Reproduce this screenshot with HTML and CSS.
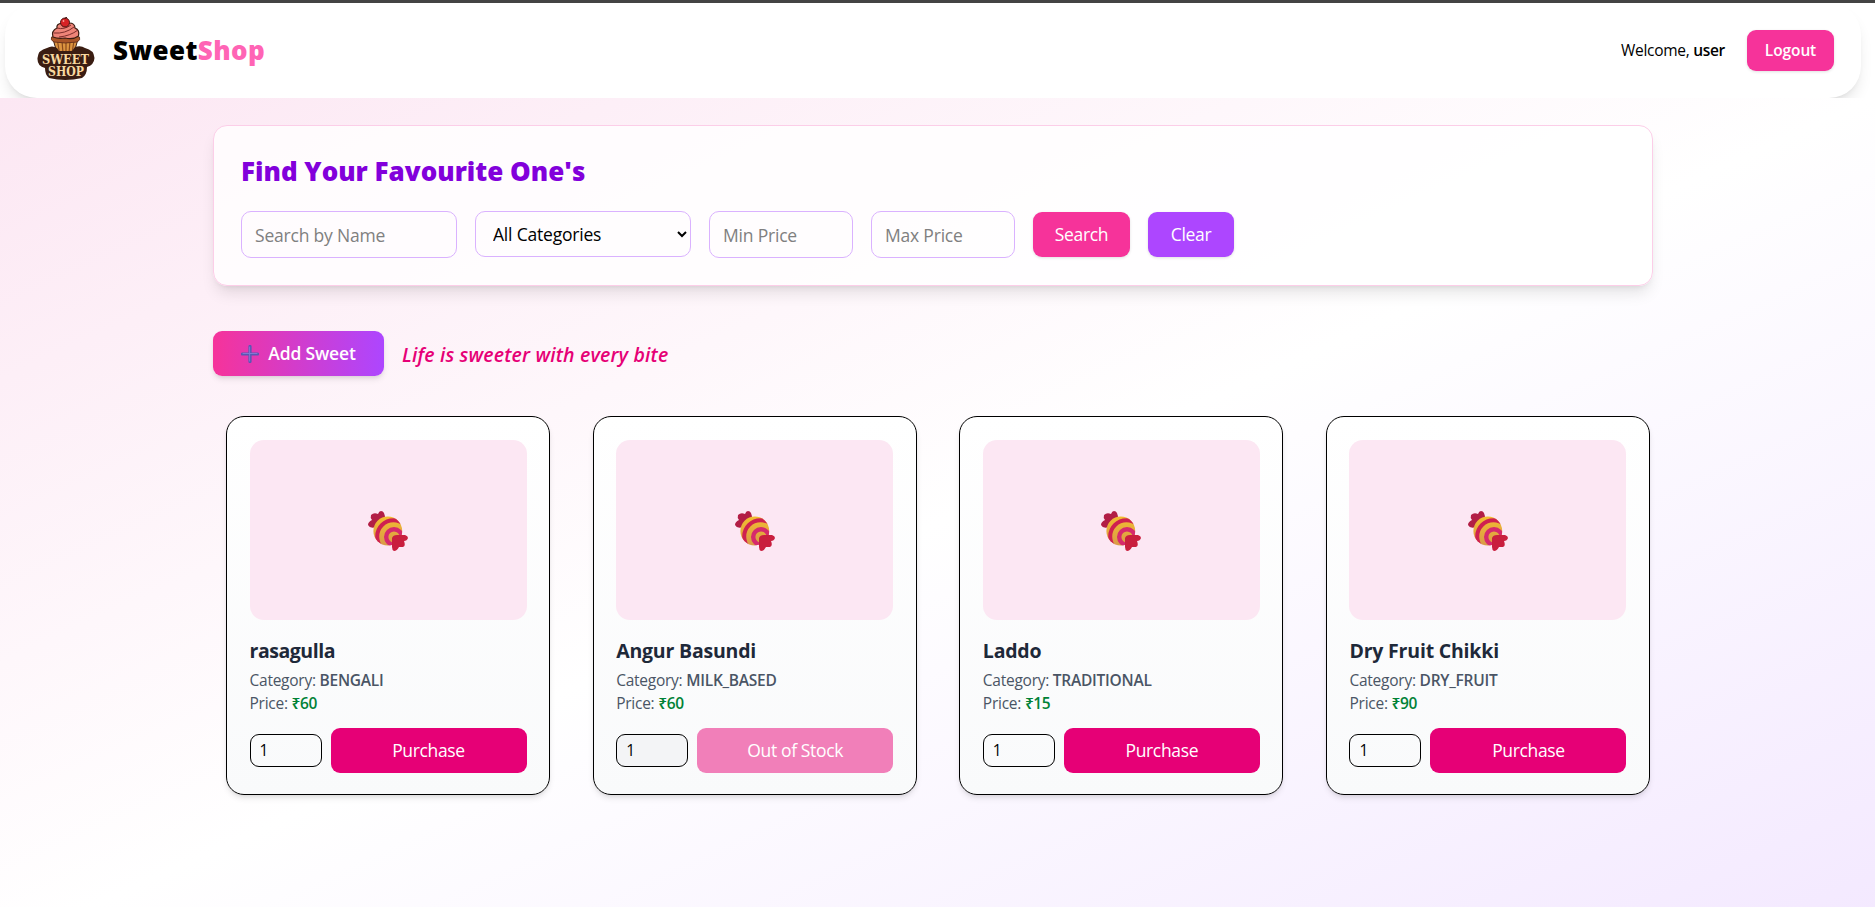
FILE: index.html
```html
<!DOCTYPE html>
<html lang="en">
<head>
<meta charset="utf-8">
<title>SweetShop</title>
<link rel="stylesheet" href="styles.css">
</head>
<body>
<svg width="0" height="0" class="defs" aria-hidden="true">
  <defs>
    <linearGradient id="gold" x1="0" y1="0" x2="0" y2="1"><stop offset="0" stop-color="#f2bd30"/><stop offset="1" stop-color="#d99a48"/></linearGradient>
    <clipPath id="ball"><circle cx="19.8" cy="20" r="14.4"/></clipPath>
    <symbol id="candy" viewBox="0 0 40 40">
      <path d="M17 8 Q17 0 13 0 Q11 0 10 3 Q6 1 3 4 Q2 7 4 9 Q0 11 0 14 Q2 18 8 16 L15 15Z" fill="#b21e45"/>
      <circle cx="19.8" cy="20" r="14.4" fill="url(#gold)"/>
      <g clip-path="url(#ball)" fill="none" stroke="#cf2150">
        <circle cx="26" cy="26" r="7.800" stroke="#d62a6c" stroke-width="4.400"/>
        <circle cx="25.500" cy="25.500" r="16.300" stroke-width="4"/>
      </g>
      <path d="M24 27 Q25 24 29 24 L37 24 Q40 25 40 27 Q39 30 36 30 Q38 35 35 36 L31 36 Q29 40 26 40 Q24 39 24 36Z" fill="#c91f3e"/>
    </symbol>
  </defs>
</svg>
<div class="topline"></div>
<header class="header">
  <nav class="nav">
    <svg class="logo" viewBox="0 0 58 64">
      <path d="M16 22 L41 22 L37 36 L20 36Z" fill="#dc9440" stroke="#3a1d12" stroke-width="1"/>
      <path d="M20.500 24l2 12M25 24l1 12M29 24v12M33 24l-1 12M37 24l-2 12" stroke="#8a4a1c" stroke-width="1.200"/>
      <path d="M14.500 20 Q28 16 42.500 20 Q44 23 40 25 Q28 27 17 25 Q13 23 14.500 20Z" fill="#a95527" stroke="#5a2a18" stroke-width=".8"/>
      <path d="M16 20 Q14 14 20 11 Q19 7 25 6 L32 6 Q38 6 38 11 Q43 13 41.500 19 Q36 23 28 21 Q21 22 16 20Z" fill="#ee8478" stroke="#3a1d12" stroke-width="1.200"/>
      <path d="M17 16 Q28 17 37 10 M22 20 Q33 19 41 13 M20 11 Q27 13 34 8" fill="none" stroke="#7c2c2a" stroke-width="1"/>
      <circle cx="28" cy="5.500" r="4.500" fill="#d72225" stroke="#4a1512" stroke-width="1"/>
      <path d="M28 2Q28 0 30 .5" fill="none" stroke="#4a1512"/><circle cx="26.500" cy="4" r=".9" fill="#fa9c94"/>
      <path d="M10 31 Q15 28 20 31 L22 34 H35 L38 30 Q44 28 48 31 Q57 33 57.500 41 Q57 48 50 50 Q50 58 45 61 Q28 65 12 61 Q8 58 8 51 Q0 49 .5 41 Q1 33 10 31Z" fill="#3a1d12"/>
      <text x="5" y="46.500" textLength="47" lengthAdjust="spacingAndGlyphs" class="logo-text">SWEET</text>
      <text x="11" y="59" textLength="36" lengthAdjust="spacingAndGlyphs" class="logo-text">SHOP</text>
    </svg>
    <span class="brand">Sweet<span class="brand-accent">Shop</span></span>
    <span class="welcome">Welcome, <b>user</b></span>
    <button class="btn logout">Logout</button>
  </nav>
</header>
<main class="main">
  <div class="container">
    <section class="search">
      <h2 class="search-title">Find Your Favourite One's</h2>
      <div class="filters">
        <input class="field wide" placeholder="Search by Name">
        <select class="field select"><option>All Categories</option></select>
        <input class="field" placeholder="Min Price">
        <input class="field" placeholder="Max Price">
        <button class="btn find">Search</button>
        <button class="btn clear">Clear</button>
      </div>
    </section>
    <div class="actions">
      <button class="btn add"><svg class="plus" viewBox="0 0 18 18"><path d="M9 1.500v15M1.500 9h15" stroke="#5a58b4" stroke-width="3.200" stroke-linecap="round"/><path d="M8.600 2v14M2 8.500h14" stroke="#8278d2" stroke-width="1" stroke-linecap="round"/></svg><span>Add Sweet</span></button>
      <span class="tagline">Life is sweeter with every bite</span>
    </div>
    <div class="grid">
      <article class="card">
        <div class="photo"><svg class="candy"><use href="#candy"/></svg></div>
        <h3 class="name first">rasagulla</h3>
        <p class="meta">Category: <b>BENGALI</b></p>
        <p class="meta">Price: <b class="price">₹60</b></p>
        <div class="buy"><input class="qty" value="1"><button class="btn purchase">Purchase</button></div>
      </article>
      <article class="card">
        <div class="photo"><svg class="candy"><use href="#candy"/></svg></div>
        <h3 class="name">Angur Basundi</h3>
        <p class="meta">Category: <b>MILK_BASED</b></p>
        <p class="meta">Price: <b class="price">₹60</b></p>
        <div class="buy"><input class="qty off" value="1"><button class="btn purchase sold">Out of Stock</button></div>
      </article>
      <article class="card">
        <div class="photo"><svg class="candy"><use href="#candy"/></svg></div>
        <h3 class="name">Laddo</h3>
        <p class="meta">Category: <b>TRADITIONAL</b></p>
        <p class="meta">Price: <b class="price">₹15</b></p>
        <div class="buy"><input class="qty" value="1"><button class="btn purchase">Purchase</button></div>
      </article>
      <article class="card">
        <div class="photo"><svg class="candy"><use href="#candy"/></svg></div>
        <h3 class="name">Dry Fruit Chikki</h3>
        <p class="meta">Category: <b>DRY_FRUIT</b></p>
        <p class="meta">Price: <b class="price">₹90</b></p>
        <div class="buy"><input class="qty" value="1"><button class="btn purchase">Purchase</button></div>
      </article>
    </div>
  </div>
</main>
</body>
</html>
```
FILE: styles.css
```css
* { box-sizing: border-box; margin: 0; padding: 0; }
body { font-family: "Open Sans", "Noto Sans", sans-serif; font-size: 17px; line-height: 27px; color: #000; background: #fff; height: 907px; overflow: hidden; }
.defs { position: absolute; }
button, input, select { font: inherit; color: inherit; }
.topline { height: 3px; background: #444; }
.header { height: 95px; padding: 0 14px 0 5px; overflow: hidden; background: #fff; }
.nav { height: 95px; display: flex; align-items: center; padding: 0 27px 0 32px; border-radius: 32px; background: #fff; box-shadow: 0 10px 15px -3px rgba(0,0,0,.1), 0 4px 6px -4px rgba(0,0,0,.1); }
.logo { width: 58px; height: 64px; margin-top: -4px; }
.logo-text { font: 700 13px "DejaVu Serif", serif; fill: #f8d9a0; }
.brand { margin: 0 0 0 18px; font-size: 26px; font-weight: 800; letter-spacing: .4px; }
.brand-accent { color: #ff64b5; }
.welcome { margin-left: auto; font-size: 15.500px; letter-spacing: -.3px; margin-right: 22px; }
.welcome b { font-weight: 600; }
.btn { border: 0; border-radius: 9px; color: #fff; background: #f6339a; display: flex; align-items: center; justify-content: center; font-size: 17.500px; letter-spacing: -.35px; }
.logout { width: 87px; height: 41px; margin-top: 5px; margin-bottom: 5px; font-size: 15.500px; font-weight: 600; letter-spacing: -.1px; box-shadow: 0 1px 3px rgba(0,0,0,.12); }
.main { height: 809px; padding: 27px 9px 0 0; background: linear-gradient(to bottom right, #fce7f3, #fff 50%, #f3e8ff) 0 0 / 100% 850px no-repeat; }
.container { width: 1440px; margin: 0 auto; }
.search { height: 161px; padding: 25px 26px 26px 27px; border: 1px solid #fccee8; border-radius: 14px; background: rgba(255,255,255,.8); box-shadow: 0 10px 15px -3px rgba(0,0,0,.1), 0 4px 6px -4px rgba(0,0,0,.1); }
.search-title { height: 40px; line-height: 40px; font-size: 26px; font-weight: 800; color: #8200db; white-space: nowrap; margin-bottom: 20px; }
.filters { display: flex; gap: 18px; align-items: flex-start; }
.field { width: 144px; height: 47px; padding: 0 13px; border: 1px solid #dab2ff; border-radius: 10px; background: transparent; font-size: 17.500px; letter-spacing: -.2px; }
.field::placeholder { color: #808080; }
.wide { width: 216px; }
.select { width: 216px; height: 46px; padding: 0 0 0 13px; }
.find { width: 97px; height: 45px; margin-top: 1px; box-shadow: 0 1px 3px rgba(0,0,0,.12); }
.clear { width: 86px; height: 45px; margin-top: 1px; background: #ad46ff; box-shadow: 0 1px 3px rgba(0,0,0,.12); }
.actions { display: flex; align-items: center; gap: 18px; margin-top: 45px; height: 45px; }
.add { width: 171px; height: 45px; gap: 9px; font-weight: 600; letter-spacing: -.15px; background: linear-gradient(to right, #f6339a, #ad46ff); box-shadow: 0 4px 6px -1px rgba(0,0,0,.1), 0 2px 4px -2px rgba(0,0,0,.1); }
.plus { width: 18px; height: 18px; fill: none; }
.tagline { font-size: 19.500px; letter-spacing: .15px; font-style: italic; font-weight: 600; color: #e60076; white-space: nowrap; padding-top: 2px; }
.grid { display: grid; grid-template-columns: repeat(4, 324px); column-gap: 42.670px; margin: 40px 0 0 13px; }
.card { height: 379px; padding: 22.500px; border: 1px solid #000; border-radius: 18px; background: linear-gradient(to bottom, #fff, #f9fafb); box-shadow: 0 4px 6px -1px rgba(0,0,0,.1), 0 2px 4px -2px rgba(0,0,0,.1); }
.photo { height: 180px; border-radius: 14px; background: #fce7f3; display: flex; align-items: center; justify-content: center; margin-bottom: 16px; }
.candy { width: 40px; height: 40px; margin-top: 3px; }
.name { font-size: 19.500px; font-weight: 700; line-height: 29px; color: #1e2939; letter-spacing: -.2px; margin-bottom: 4px; }
.first { letter-spacing: -.45px; }
.meta { font-size: 15.500px; line-height: 23px; color: #4a5565; letter-spacing: -.25px; }
.meta b { font-weight: 600; }
.meta .price { color: #008236; letter-spacing: -.4px; }
.buy { display: flex; align-items: center; gap: 9px; margin-top: 13px; }
.qty { width: 72px; height: 33px; padding: 0 9px; border: 1px solid #000; border-radius: 9px; font-size: 15.500px; background: transparent; }
.off { background: #f3f4f6; }
.purchase { flex: 1; height: 45px; background: #e60076; }
.sold { background: #f17fb9; }
```
